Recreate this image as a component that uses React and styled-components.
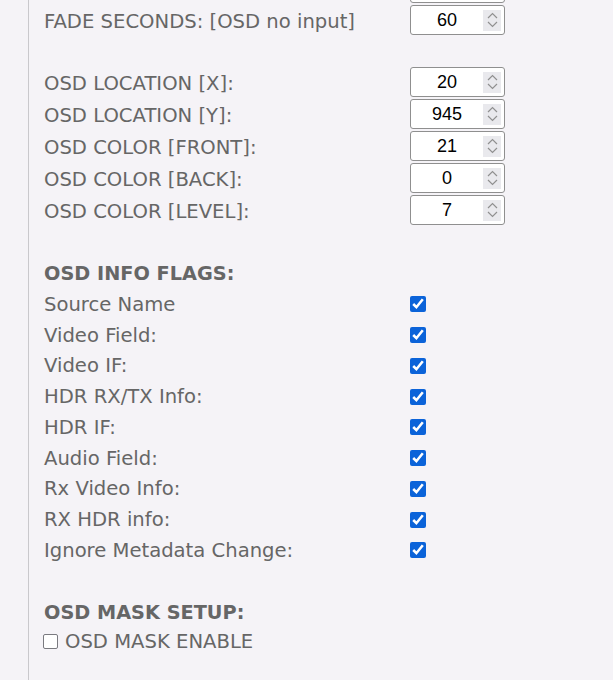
import React from 'react';
import styled, { createGlobalStyle } from 'styled-components';

const GlobalStyle = createGlobalStyle`
  html, body {
    margin: 0;
    padding: 0;
    background: #f5f3f7;
    overflow: hidden;
  }
`;

const Page = styled.div`
  height: 720px;
  margin-top: -28px;
  margin-left: 28px;
  border-left: 1px solid #c9c8cc;
  padding-left: 15px;
  font-family: 'DejaVu Sans', Verdana, sans-serif;
  font-size: 19.6px;
  color: #666666;
`;

const FieldRow = styled.div`
  display: grid;
  grid-template-columns: 366px 95px;
  align-items: center;
  height: 32px;
`;

const Label = styled.span`
  white-space: nowrap;
  padding-top: 2px;
`;

const Spacer = styled.div`
  height: ${(p) => p.$h}px;
`;

const Heading = styled.div`
  height: 31px;
  line-height: 34px;
  font-weight: bold;
  font-size: 19.3px;
`;

const CheckRow = styled.label`
  display: grid;
  grid-template-columns: 366px 16px;
  align-items: center;
  height: 30.75px;
`;

const Check = styled.input.attrs({ type: 'checkbox' })`
  width: 16px;
  height: 16px;
  margin: 2px 0 0;
  accent-color: #0b63d9;
`;

const InlineCheckRow = styled.label`
  display: flex;
  align-items: center;
  gap: 7px;
  height: 28px;
  margin-left: -1px;
`;

const PlainCheck = styled.input.attrs({ type: 'checkbox' })`
  appearance: none;
  box-sizing: border-box;
  width: 15px;
  height: 15px;
  margin: 2px 0 0;
  background: #ffffff;
  border: 1.5px solid #7a7a80;
  border-radius: 2px;
`;

const NumberBox = styled.div`
  display: flex;
  align-items: center;
  box-sizing: border-box;
  height: 30px;
  width: 95px;
  background: #ffffff;
  border: 1px solid #8f8f8f;
  border-radius: 3px;
  padding-right: 3px;
`;

const NumberText = styled.input`
  flex: 1;
  min-width: 0;
  border: none;
  outline: none;
  background: transparent;
  text-align: center;
  font-family: 'Liberation Sans', Arial, sans-serif;
  font-size: 18px;
  color: #000000;
  padding: 0;
`;

const Spinner = styled.div`
  display: flex;
  flex-direction: column;
  align-items: center;
  justify-content: center;
  width: 18px;
  height: 21px;
  background: #e9e9ed;
  gap: 2px;
`;

const Chevron = ({ up }) => (
  <svg width="11" height="7" viewBox="0 0 11 7">
    <path
      d={up ? 'M1 6 L5.5 1.5 L10 6' : 'M1 1 L5.5 5.5 L10 1'}
      fill="none"
      stroke="#909090"
      strokeWidth="1.2"
    />
  </svg>
);

const NumberField = ({ value }) => (
  <NumberBox>
    <NumberText defaultValue={value} />
    <Spinner>
      <Chevron up />
      <Chevron />
    </Spinner>
  </NumberBox>
);

const fields = [
  ['OSD LOCATION [X]:', 20],
  ['OSD LOCATION [Y]:', 945],
  ['OSD COLOR [FRONT]:', 21],
  ['OSD COLOR [BACK]:', 0],
  ['OSD COLOR [LEVEL]:', 7],
];

const flags = [
  'Source Name',
  'Video Field:',
  'Video IF:',
  'HDR RX/TX Info:',
  'HDR IF:',
  'Audio Field:',
  'Rx Video Info:',
  'RX HDR info:',
  'Ignore Metadata Change:',
];

const App = () => (
  <>
    <GlobalStyle />
    <Page>
      <FieldRow>
        <Label />
        <NumberField value={1} />
      </FieldRow>
      <FieldRow>
        <Label>FADE SECONDS: [OSD no input]</Label>
        <NumberField value={60} />
      </FieldRow>
      <Spacer $h={30} />
      {fields.map(([label, value]) => (
        <FieldRow key={label}>
          <Label>{label}</Label>
          <NumberField value={value} />
        </FieldRow>
      ))}
      <Spacer $h={31} />
      <Heading>OSD INFO FLAGS:</Heading>
      {flags.map((flag) => (
        <CheckRow key={flag}>
          <Label>{flag}</Label>
          <Check defaultChecked />
        </CheckRow>
      ))}
      <Spacer $h={31} />
      <Heading>OSD MASK SETUP:</Heading>
      <InlineCheckRow>
        <PlainCheck />
        <Label>OSD MASK ENABLE</Label>
      </InlineCheckRow>
    </Page>
  </>
);

export default App;
